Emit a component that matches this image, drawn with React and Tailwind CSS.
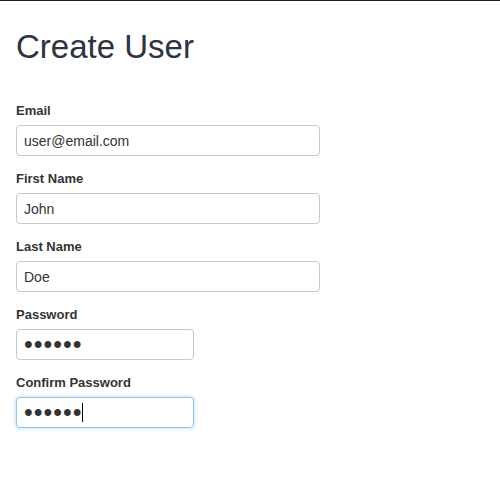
import React from "react";

const Field = ({ label, type = "text", value, wide = true, focused = false }) => (
  <div className="mb-[14px]">
    <label className="block text-[13px] leading-[18px] font-bold text-[#333] mb-[5px]">
      {label}
    </label>
    <div className="relative">
      <input
        type={type}
        defaultValue={value}
        autoFocus={focused}
        className={
          "block h-[31px] rounded-[4px] border bg-white px-[7px] text-[#333] outline-none " +
          (type === "password" ? "text-[25px] tracking-[1px] " : "text-[14px] ") +
          (wide ? "w-[304px] " : "w-[178px] ") +
          (focused
            ? "border-[#8ec5ee] shadow-[0_0_4px_rgba(102,175,233,0.5)] caret-transparent"
            : "border-[#c8c8c8]")
        }
      />
      {/* caret as seen in the focused field */}
      {focused && (
        <span className="pointer-events-none absolute left-[66px] top-[6px] h-[19px] w-px bg-black" />
      )}
    </div>
  </div>
);

const App = () => {
  return (
    <div
      className="min-h-[500px] bg-white border-t border-[#1b1f22] px-4"
      style={{ fontFamily: '"Liberation Sans", Arial, sans-serif' }}
    >
      <h1 className="pt-[27px] text-[33px] leading-[37px] font-normal text-[#2b3440] mb-[37px]">
        Create User
      </h1>
      <form>
        <Field label="Email" value="user@email.com" />
        <Field label="First Name" value="John" />
        <Field label="Last Name" value="Doe" />
        <Field label="Password" type="password" value="secret" wide={false} />
        <Field
          label="Confirm Password"
          type="password"
          value="secret"
          wide={false}
          focused
        />
      </form>
    </div>
  );
};

export default App;
